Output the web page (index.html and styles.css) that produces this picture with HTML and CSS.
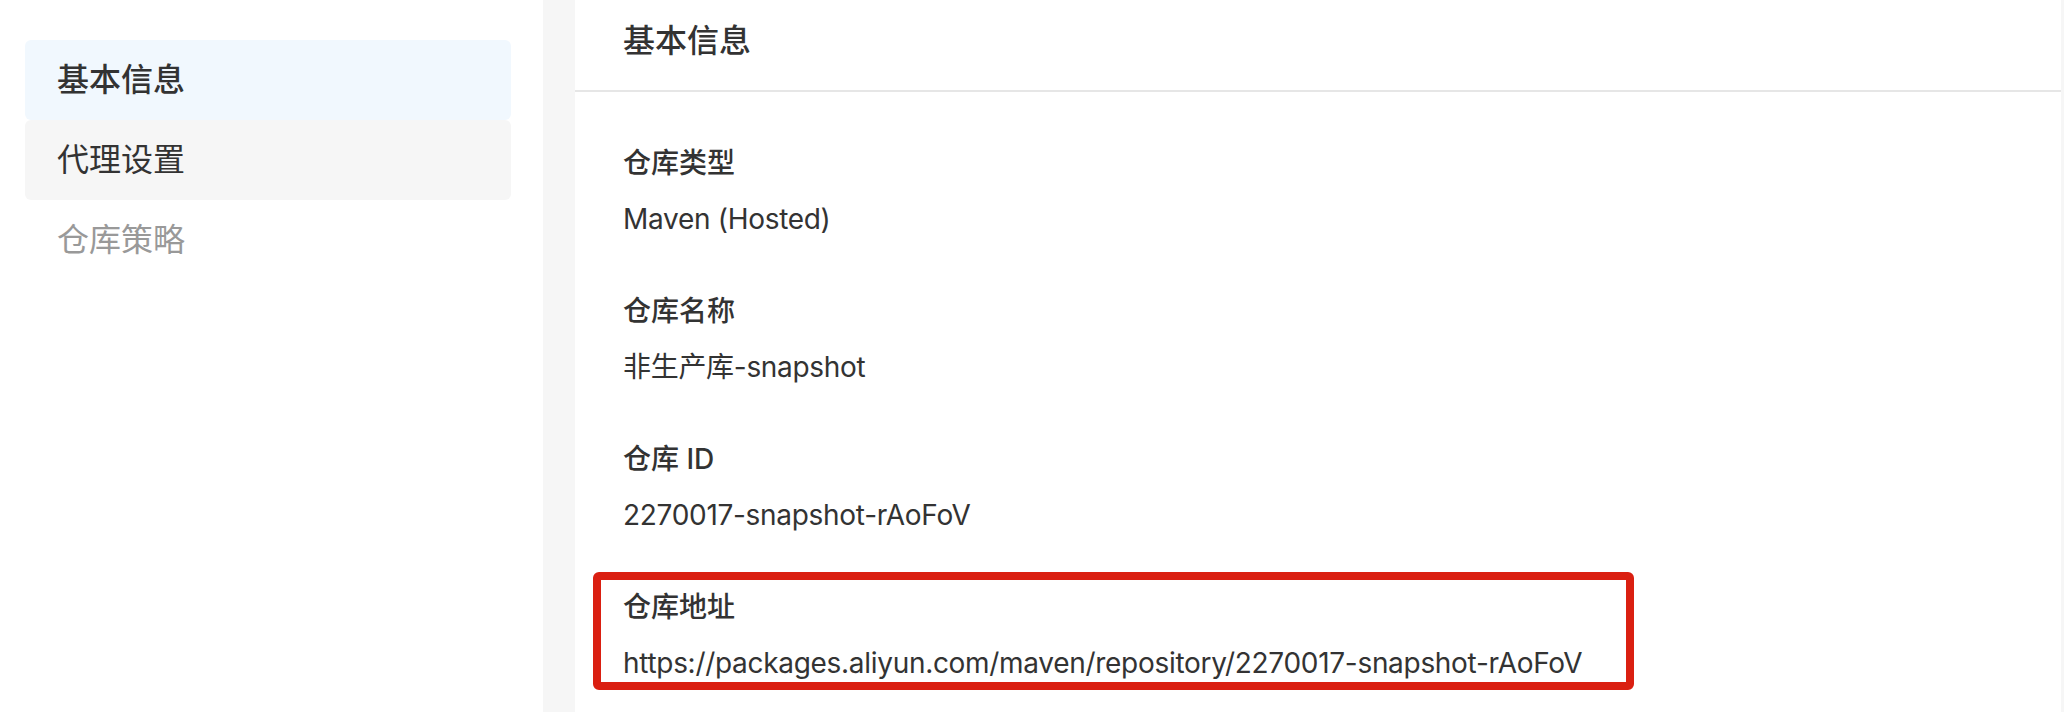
FILE: index.html
```html
<!DOCTYPE html>
<html lang="zh-CN">
<head>
    <meta charset="UTF-8">
    <meta name="viewport" content="width=device-width, initial-scale=1.0">
    <title>仓库设置</title>
    <link rel="stylesheet" href="styles.css">
</head>
<body>
    <div class="layout">
        <div class="sidebar">
            <div class="nav-item active">基本信息</div>
            <div class="nav-item hover">代理设置</div>
            <div class="nav-item disabled">仓库策略</div>
        </div>

        <div class="panel">
            <div class="panel-header">
                <h2>基本信息</h2>
            </div>
            <div class="panel-body">
                <div class="field">
                    <div class="field-label">仓库类型</div>
                    <div class="field-value">Maven (Hosted)</div>
                </div>
                <div class="field">
                    <div class="field-label">仓库名称</div>
                    <div class="field-value">非生产库-snapshot</div>
                </div>
                <div class="field">
                    <div class="field-label">仓库 ID</div>
                    <div class="field-value">2270017-snapshot-rAoFoV</div>
                </div>
                <div class="field marked">
                    <div class="field-label">仓库地址</div>
                    <div class="field-value">https://packages.aliyun.com/maven/repository/2270017-snapshot-rAoFoV</div>
                </div>
            </div>
        </div>
    </div>
</body>
</html>
```

FILE: styles.css
```css
body {
    margin: 0;
    padding: 0;
    background: #f6f6f6;
    color: #333;
    font-family: "Inter", "Noto Sans CJK SC", sans-serif;
    height: 712px;
    overflow: hidden;
}
.layout {
    display: flex;
    gap: 32px;
    height: 100%;
    padding-right: 3px;
}
.sidebar {
    width: 486px;
    padding: 40px 32px 0 25px;
    background: #fff;
    flex-shrink: 0;
}
.nav-item {
    height: 80px;
    line-height: 80px;
    padding-left: 32px;
    border-radius: 6px;
    font-size: 32px;
    color: #333;
}
.nav-item.active {
    background: #f1f8fe;
    font-weight: 500;
}
.nav-item.hover {
    background: #f6f6f6;
}
.nav-item.disabled {
    color: #999;
}
.panel {
    flex: 1;
    background: #fff;
}
.panel-header {
    padding: 17px 48px 25px;
    border-bottom: 2px solid #e6e6e6;
}
.panel-header h2 {
    margin: 0;
    font-size: 32px;
    line-height: 48px;
    font-weight: 500;
}
.panel-body {
    padding: 51px 48px 0;
}
.field {
    margin-bottom: 52px;
}
.field-label {
    font-size: 28px;
    line-height: 40px;
    font-weight: 500;
    margin-bottom: 16px;
}
.field-value {
    font-size: 28px;
    line-height: 40px;
    letter-spacing: -0.3px;
}
.marked {
    position: relative;
}
.marked::after {
    content: "";
    position: absolute;
    left: -30px;
    top: -15px;
    width: 1041px;
    height: 118px;
    box-sizing: border-box;
    border: 8px solid #da1f11;
    border-radius: 6px;
}
```
